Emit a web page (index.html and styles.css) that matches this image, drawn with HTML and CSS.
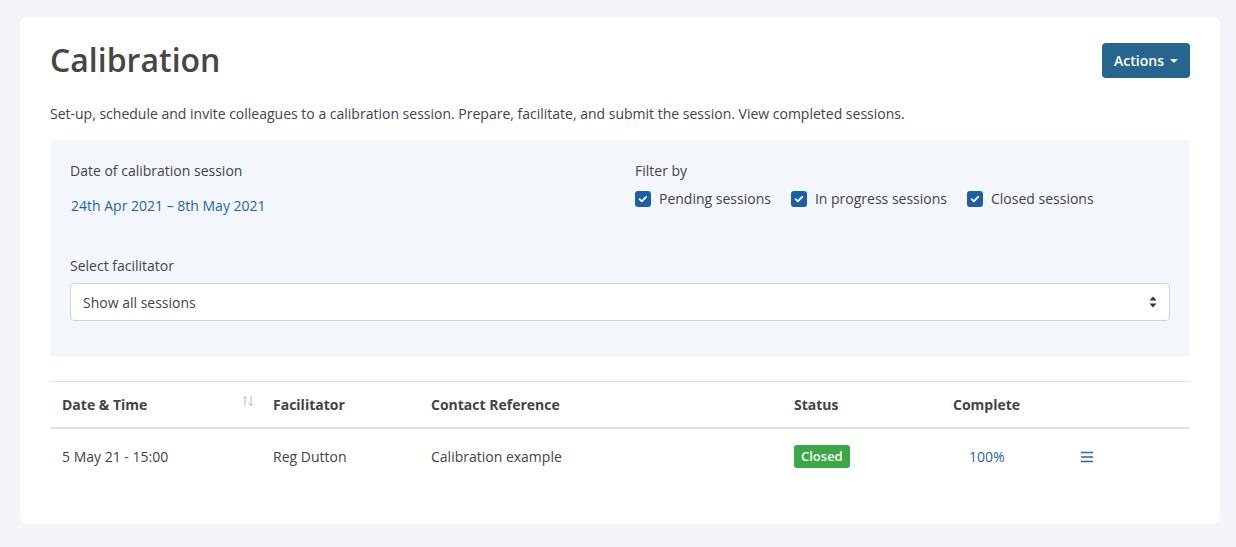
FILE: index.html
```html
<!DOCTYPE html>
<html lang="en">
<head>
<meta charset="utf-8">
<title>Calibration</title>
<link rel="stylesheet" href="styles.css">
</head>
<body>
<div class="page">
  <div class="card">
    <div class="head">
      <h1 class="title">Calibration</h1>
      <button class="btn-actions">Actions <span class="caret"></span></button>
    </div>
    <p class="desc">Set-up, schedule and invite colleagues to a calibration session. Prepare, facilitate, and submit the session. View completed sessions.</p>
    <div class="filters">
      <div class="row">
        <div class="col">
          <div class="label">Date of calibration session</div>
          <a class="date-link">24th Apr 2021 – 8th May 2021</a>
        </div>
        <div class="col col-right">
          <div class="label">Filter by</div>
          <div class="checks">
            <label class="check"><span class="box"><svg viewBox="0 0 16 16" width="16" height="16"><path d="M4.6 8.2l2.2 2.2 4.4-4.6" fill="none" stroke="#fff" stroke-width="1.8" stroke-linecap="round" stroke-linejoin="round"/></svg></span>Pending sessions</label>
            <label class="check"><span class="box"><svg viewBox="0 0 16 16" width="16" height="16"><path d="M4.6 8.2l2.2 2.2 4.4-4.6" fill="none" stroke="#fff" stroke-width="1.8" stroke-linecap="round" stroke-linejoin="round"/></svg></span>In progress sessions</label>
            <label class="check"><span class="box"><svg viewBox="0 0 16 16" width="16" height="16"><path d="M4.6 8.2l2.2 2.2 4.4-4.6" fill="none" stroke="#fff" stroke-width="1.8" stroke-linecap="round" stroke-linejoin="round"/></svg></span>Closed sessions</label>
          </div>
        </div>
      </div>
      <div class="label label-select">Select facilitator</div>
      <div class="select">
        <span>Show all sessions</span>
        <svg class="arrows" viewBox="0 0 10 14" width="10" height="14"><path d="M5 1.5L8.5 5.5H1.5Z M5 12.5L1.5 8.5H8.5Z" fill="#333"/></svg>
      </div>
    </div>
    <table class="table">
      <thead>
        <tr>
          <th class="c1"><div class="th-sort">Date &amp; Time<svg class="sort" viewBox="0 0 14 12" width="14" height="12"><path d="M4 11V1.5M1.8 3.7L4 1.5l2.2 2.2M10 1v9.5M7.8 8.3L10 10.5l2.2-2.2" fill="none" stroke="#b9bcc2" stroke-width="1"/></svg></div></th>
          <th class="c2">Facilitator</th>
          <th class="c3">Contact Reference</th>
          <th class="c4">Status</th>
          <th class="c5">Complete</th>
          <th class="c6"></th>
        </tr>
      </thead>
      <tbody>
        <tr>
          <td>5 May 21 - 15:00</td>
          <td>Reg Dutton</td>
          <td>Calibration example</td>
          <td><span class="badge">Closed</span></td>
          <td class="pct">100%</td>
          <td class="menu"><svg viewBox="0 0 14 12" width="14" height="12"><path d="M1 1.5h12M1 6h12M1 10.5h12" stroke="#1f66b3" stroke-width="1.4"/></svg></td>
        </tr>
      </tbody>
    </table>
  </div>
</div>
</body>
</html>
```
FILE: styles.css
```css
* { box-sizing: border-box; }
html, body { margin: 0; padding: 0; }
body {
  background: #f4f5f9;
  font-family: "Open Sans", "Liberation Sans", sans-serif;
  font-size: 14px;
  line-height: 21px;
  color: #444;
}
.page { padding: 17px 16px 23px 20px; }
.card {
  background: #fff;
  border-radius: 8px;
  padding: 24px 30px 40px;
  width: 1200px;
}
.head {
  display: flex;
  align-items: center;
  justify-content: space-between;
  height: 38px;
}
.title {
  margin: 0;
  font-size: 32px;
  font-weight: 600;
  line-height: 38px;
  color: #464646;
}
.btn-actions {
  font-family: inherit;
  background: #27658f;
  color: #fff;
  border: 0;
  border-radius: 4px;
  height: 35px;
  padding: 0 12px 0 12px;
  font-size: 14px;
  font-weight: 600;
  display: flex;
  align-items: center;
  gap: 6px;
  margin-top: 1px;
}
.caret {
  width: 0; height: 0;
  border-left: 4px solid transparent;
  border-right: 4px solid transparent;
  border-top: 4px solid #fff;
  margin-top: 1px;
}
.desc { margin: 24px 0 16px; }
.filters {
  background: #f3f7fb;
  border-radius: 4px;
  padding: 20px 20px 36px;
}
.row { display: grid; grid-template-columns: 1fr 1fr; }
.col-right { padding-left: 15px; }
.label { color: #444; }
.date-link { display: block; margin-top: 14px; margin-left: 1px; color: #1f64ae; }
.checks { display: flex; gap: 20px; margin-top: 7px; }
.check { display: flex; align-items: center; gap: 8px; }
.box {
  width: 16px; height: 16px;
  background: #1c5ea8;
  border-radius: 3px;
  display: flex;
}
.label-select { margin-top: 39px; }
.select {
  margin-top: 7px;
  height: 38px;
  background: #fff;
  border: 1px solid #cfd3da;
  border-radius: 4px;
  display: flex;
  align-items: center;
  justify-content: space-between;
  padding: 0 11px 0 12px;
}
.table {
  width: 100%;
  margin-top: 24px;
  border-collapse: collapse;
}
.table th {
  text-align: left;
  font-weight: 700;
  padding: 12px 12px 12px;
  border-top: 1px solid #dee1e6;
  border-bottom: 2px solid #dee1e6;
  color: #444;
}
.table td { padding: 16px 12px 16px; vertical-align: middle; }
.c1 { width: 211px; }
.c2 { width: 158px; }
.c3 { width: 363px; }
.c4 { width: 159px; }
.c5 { width: 128px; }
.th-sort { display: flex; justify-content: space-between; align-items: flex-start; }
.sort { margin-top: 1px; margin-right: -6px; }
.badge {
  display: inline-block;
  background: #3aa845;
  color: #fff;
  font-size: 13px;
  font-weight: 600;
  line-height: 23px;
  padding: 0 7px;
  border-radius: 3px;
}
.pct { color: #1f66b3; padding-left: 28px !important; }
.menu svg { display: block; margin-left: -1px; }
```
